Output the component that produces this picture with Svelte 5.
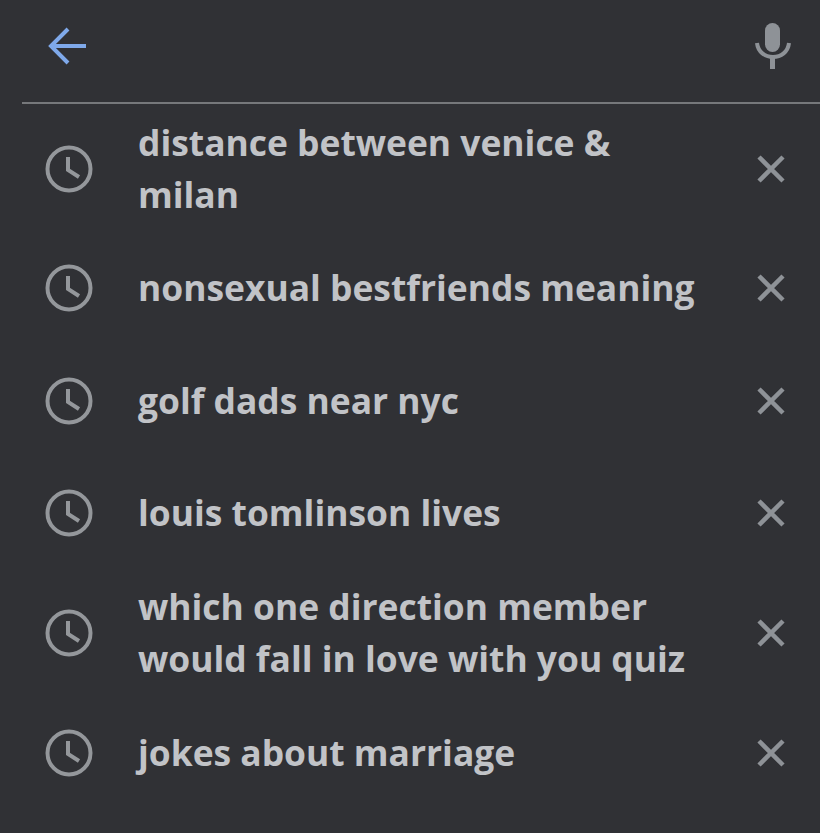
<script>
	const items = [
		{ text: 'distance between venice & milan', tall: true },
		{ text: 'nonsexual bestfriends meaning' },
		{ text: 'golf dads near nyc' },
		{ text: 'louis tomlinson lives' },
		{ text: 'which one direction member would fall in love with you quiz', tall: true },
		{ text: 'jokes about marriage' }
	];
</script>

<div class="page">
	<header class="search">
		<svg class="back" width="40" height="38" viewBox="0 0 40 38" fill="none" stroke="#7fa9ea" stroke-width="4">
			<path d="M38 19H3" />
			<path d="M20 2L3 19l17 17" />
		</svg>
		<svg class="mic" width="36" height="46" viewBox="0 0 36 46" fill="none">
			<rect x="10" y="0" width="15" height="29" rx="7.5" fill="#8e9297" />
			<path d="M2 20c1 9 8 14 16 14s15-5 16-14" stroke="#8e9297" stroke-width="4" />
			<path d="M17.500 33v13" stroke="#8e9297" stroke-width="5" />
		</svg>
	</header>

	<ul class="list">
		{#each items as item}
			<li class="row" class:tall={item.tall}>
				<svg class="clock" width="48" height="48" viewBox="0 0 48 48" fill="none" stroke="#94979b" stroke-width="4">
					<circle cx="24" cy="24" r="21.500" />
					<path d="M23 12v13l11 7" />
				</svg>
				<span class="text">{item.text}</span>
				<svg class="close" width="28" height="28" viewBox="0 0 28 28" fill="none" stroke="#8e9297" stroke-width="4.500">
					<path d="M2 2l24 24M26 2L2 26" />
				</svg>
			</li>
		{/each}
	</ul>
</div>

<style>
	:global(body) {
		background-color: #303135;
	}

	.page {
		height: 833px;
		background-color: #303135;
		overflow: hidden;
		font-family: "Open Sans", Lato, sans-serif;
	}

	.search {
		display: flex;
		align-items: center;
		justify-content: space-between;
		box-sizing: border-box;
		height: 104px;
		margin-left: 22px;
		padding: 0 29px 10px 26px;
		border-bottom: 2px solid #76787b;
	}

	.list {
		list-style: none;
		margin: 0;
		padding: 1px 0 0;
	}

	.row {
		display: flex;
		align-items: center;
		height: 112.5px;
		padding: 0 35px 0 45px;
	}

	.row.tall {
		height: 127px;
	}

	.clock {
		flex: none;
	}

	.text {
		flex: 1;
		margin-left: 45px;
		margin-right: 54px;
		padding-bottom: 2px;
		color: #c1c3c7;
		font-size: 35.4px;
		font-weight: 700;
		line-height: 52px;
		font-variant-ligatures: none;
	}

	.close {
		flex: none;
	}
</style>
